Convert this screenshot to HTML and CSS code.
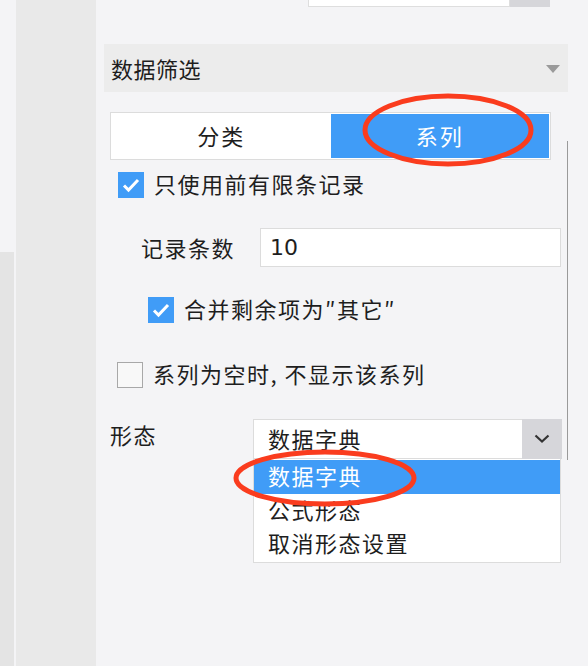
FILE: index.html
```html
<!DOCTYPE html>
<html lang="zh-CN">
<head>
<meta charset="UTF-8">
<meta name="viewport" content="width=device-width, initial-scale=1.0">
<title>数据筛选</title>
<link rel="stylesheet" href="styles.css">
</head>
<body>
<div class="app">
    <div class="edge"><div class="edge-low"></div></div>
    <aside class="sidebar"></aside>
    <main class="panel">
        <div class="prev-field">
            <div class="prev-input"></div>
            <div class="prev-btn"></div>
        </div>

        <div class="section-head">
            <span>数据筛选</span>
            <span class="caret"></span>
        </div>

        <div class="section-body">
            <div class="tabs">
                <div class="tab">分类</div>
                <div class="tab active">系列</div>
            </div>

            <div class="row row-limit">
                <span class="check on"><svg viewBox="0 0 26 26"><path d="M6 13.5l4.5 4.5 9.5-10" /></svg></span>
                <span class="row-text">只使用前有限条记录</span>
            </div>

            <div class="row row-count">
                <span class="field-label">记录条数</span>
                <div class="text-input">10</div>
            </div>

            <div class="row row-merge">
                <span class="check on"><svg viewBox="0 0 26 26"><path d="M6 13.5l4.5 4.5 9.5-10" /></svg></span>
                <span class="row-text">合并剩余项为″其它″</span>
            </div>

            <div class="row row-empty">
                <span class="check"></span>
                <span class="row-text">系列为空时, 不显示该系列</span>
            </div>

            <div class="row row-form">
                <span class="form-label">形态</span>
                <div class="combo">
                    <div class="select">
                        <span class="select-value">数据字典</span>
                        <span class="select-btn"><svg viewBox="0 0 16 10"><path d="M1.5 1.5l6.5 6 6.5-6" /></svg></span>
                    </div>
                    <ul class="options">
                        <li class="selected">数据字典</li>
                        <li>公式形态</li>
                        <li>取消形态设置</li>
                    </ul>
                </div>
            </div>
        </div>
        <div class="scroll-line"></div>
    </main>
</div>

<!-- red marks drawn over the screenshot -->
<svg class="marks" width="588" height="666" viewBox="0 0 588 666">
    <ellipse cx="448" cy="130" rx="83" ry="34" />
    <ellipse cx="325" cy="478" rx="89" ry="26" />
</svg>
</body>
</html>
```

FILE: styles.css
```css
body {
    margin: 0;
    background-color: #f4f4f6;
    font-family: "Noto Sans CJK SC", "Noto Sans", sans-serif;
    font-size: 22px;
    color: #1e1e1e;
}

.app {
    display: flex;
    height: 666px;
    overflow: hidden;
}

.edge {
    width: 14px;
    margin-right: 2px;
    display: flex;
    flex-direction: column;
    padding-top: 252px;
    box-sizing: border-box;
}

.edge-low {
    flex: 1;
    background-color: #e4e4e4;
}

.sidebar {
    width: 80px;
    background-color: #e9e9e9;
}

.panel {
    flex: 1;
    position: relative;
}

.prev-field {
    display: flex;
    margin-left: 212px;
    width: 242px;
    height: 7px;
}

.prev-input {
    flex: 1;
    background-color: #fff;
    border: 1px solid #dedede;
    border-top: none;
}

.prev-btn {
    width: 40px;
    background-color: #d6d6da;
}

.section-head {
    margin: 37px 0 0 8px;
    width: 464px;
    height: 48px;
    background-color: #ececec;
    display: flex;
    align-items: center;
    justify-content: space-between;
    padding: 0 8px 0 7px;
    box-sizing: border-box;
    letter-spacing: 0.5px;
}

.caret {
    width: 0;
    height: 0;
    border-left: 7px solid transparent;
    border-right: 7px solid transparent;
    border-top: 8px solid #9a9a9a;
    margin-top: 2px;
}

.section-body {
    display: flex;
    flex-direction: column;
}

.tabs {
    display: flex;
    margin: 20px 0 0 14px;
    width: 441px;
    height: 48px;
    border: 1px solid #dcdcdc;
    box-sizing: border-box;
    padding: 1px;
    background-color: #fff;
}

.tab {
    flex: 1;
    display: flex;
    align-items: center;
    justify-content: center;
    letter-spacing: 2px;
    padding-bottom: 2px;
}

.tab.active {
    background-color: #409cf7;
    color: #fff;
}

.row {
    display: flex;
    align-items: center;
    letter-spacing: 1.5px;
}

.row-text {
    margin-bottom: 4px;
}

.check {
    width: 26px;
    height: 26px;
    box-sizing: border-box;
    border: 1px solid #a8a8a8;
    background-color: #f8f8f8;
    margin-right: 10px;
    flex-shrink: 0;
}

.check.on {
    border: none;
    background-color: #409cf7;
}

.check svg {
    display: block;
    width: 26px;
    height: 26px;
    fill: none;
    stroke: #fff;
    stroke-width: 3;
}

.row-limit {
    margin: 12px 0 0 22px;
    height: 26px;
}

.row-count {
    margin: 30px 0 0 45px;
}

.field-label {
    width: 119px;
    margin-bottom: 2px;
}

.text-input {
    width: 301px;
    height: 39px;
    box-sizing: border-box;
    background-color: #fff;
    border: 1px solid #dcdcdc;
    padding-left: 9px;
    display: flex;
    align-items: center;
    font-family: "DejaVu Sans", sans-serif;
    letter-spacing: 0;
}

.row-merge {
    margin: 30px 0 0 52px;
    height: 26px;
}

.row-empty {
    margin: 39px 0 0 21px;
    height: 26px;
}

.row-form {
    align-items: flex-start;
    margin: 31px 0 0 14px;
}

.form-label {
    width: 143px;
    margin-top: -1px;
}

.combo {
    width: 309px;
}

.select {
    display: flex;
    height: 40px;
    background-color: #fff;
    border: 1px solid #dcdcdc;
    border-right: none;
    box-sizing: border-box;
}

.select-value {
    flex: 1;
    padding: 0 0 2px 14px;
    display: flex;
    align-items: center;
}

.select-btn {
    width: 40px;
    margin: -1px 0;
    background-color: #d6d6da;
    display: flex;
    align-items: center;
    justify-content: center;
}

.select-btn svg {
    width: 16px;
    height: 10px;
    fill: none;
    stroke: #333;
    stroke-width: 2.2;
}

.options {
    list-style: none;
    margin: 0;
    padding: 1px 0 2px;
    width: 308px;
    box-sizing: border-box;
    background-color: #fff;
    border: 1px solid #dcdcdc;
    border-top: none;
}

.options li {
    height: 33px;
    line-height: 31px;
    padding-left: 14px;
}

.options li.selected {
    height: 34px;
    background-color: #409cf7;
    color: #fff;
}

.scroll-line {
    position: absolute;
    left: 471px;
    top: 141px;
    width: 1px;
    height: 319px;
    background-color: #9a9a9a;
}

.marks {
    position: absolute;
    left: 0;
    top: 0;
    pointer-events: none;
}

.marks ellipse {
    fill: none;
    stroke: #fa3c1e;
    stroke-width: 5;
}
```
